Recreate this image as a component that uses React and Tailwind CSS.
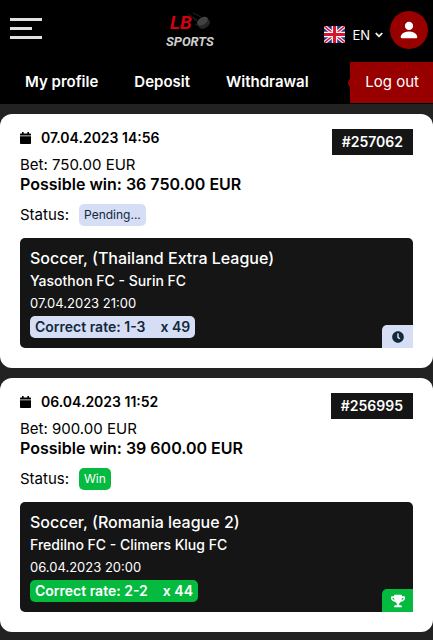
import React from 'react'
import { FaClock, FaTrophy, FaChevronDown } from 'react-icons/fa'
import { BsPersonFill } from 'react-icons/bs'
import { clsx } from 'clsx'

const bets = [
  {
    id: '257062',
    placedAt: '07.04.2023 14:56',
    amount: '750.00 EUR',
    possibleWin: '36 750.00 EUR',
    status: 'pending',
    league: 'Soccer, (Thailand Extra League)',
    match: 'Yasothon FC - Surin FC',
    startsAt: '07.04.2023 21:00',
    rate: '1-3',
    odds: 'x 49',
  },
  {
    id: '256995',
    placedAt: '06.04.2023 11:52',
    amount: '900.00 EUR',
    possibleWin: '39 600.00 EUR',
    status: 'win',
    league: 'Soccer, (Romania league 2)',
    match: 'Fredilno FC - Climers Klug FC',
    startsAt: '06.04.2023 20:00',
    rate: '2-2',
    odds: 'x 44',
  },
]

const statuses = {
  pending: { label: 'Pending...', colors: 'bg-[#d5def4] text-[#14283c]', Icon: FaClock },
  win: { label: 'Win', colors: 'bg-[#04ba3f] text-white', Icon: FaTrophy },
}

function Logo() {
  return (
    <svg width="50" height="40" viewBox="0 0 50 40" role="img" aria-label="LB Sports">
      {/* Speed lines behind the puck */}
      <path d="M22 4l9 6M27 3l8 4M27 8l6 5M29 14l4 2" stroke="#2c2c2c" strokeWidth="0.8" />
      <g transform="rotate(-32 37 12)">
        <path d="M31 11v4c0 2 3 3.5 6 3.5s6-1.5 6-3.5v-4z" fill="#262626" />
        <ellipse cx="37" cy="11" rx="6" ry="3.6" fill="#424242" />
      </g>
      <g fontFamily='"Liberation Sans Narrow", "Roboto", sans-serif' fontWeight="700" fontStyle="italic">
        <text x="4" y="19" fontSize="19" fill="#d4000c">LB</text>
        <text x="0" y="36" fontSize="13" fill="#cfcfcf">SPORTS</text>
      </g>
    </svg>
  )
}

function UkFlag() {
  return (
    <svg width="21" height="17" viewBox="0 0 21 17" aria-hidden="true">
      <rect width="21" height="17" fill="#27358b" />
      <path d="M0 0l21 17M21 0L0 17" stroke="#fff" strokeWidth="3.6" />
      <path d="M0 0l21 17M21 0L0 17" stroke="#d5162e" strokeWidth="1.5" />
      <path d="M10.5 0v17M0 8.5h21" stroke="#fff" strokeWidth="5.4" />
      <path d="M10.5 0v17M0 8.5h21" stroke="#d5162e" strokeWidth="3.2" />
    </svg>
  )
}

function CalendarIcon() {
  return (
    <svg width="11" height="12" viewBox="0 0 11 12" fill="currentColor" aria-hidden="true">
      <path d="M2 0h1.6v1.4h3.8V0H9v1.4h1.2c.5 0 .8.3.8.8v1.4H0V2.2c0-.5.3-.8.8-.8H2z" />
      <path d="M0 4.3h11v6.9c0 .5-.3.8-.8.8H.8c-.5 0-.8-.3-.8-.8z" />
    </svg>
  )
}

function Header() {
  return (
    <header className="bg-black text-white">
      <div className="flex h-[60px] items-center justify-between pl-2.5 pr-[5px]">
        <button type="button" aria-label="Menu" className="mb-1 flex h-6 w-8 flex-col justify-center gap-[6px]">
          <span className="h-[3px] w-8 bg-[#e0e0e0]" />
          <span className="h-[3px] w-[22px] bg-[#e0e0e0]" />
          <span className="h-[3px] w-8 bg-[#e0e0e0]" />
        </button>
        <a href="#home" className="pl-4">
          <Logo />
        </a>
        <div className="flex items-center">
          <button type="button" className="mr-[7px] flex items-end pt-2 text-[13px] leading-4">
            <UkFlag />
            <span className="ml-[7px]">EN</span>
            <FaChevronDown className="mb-1 ml-[5px] size-2" stroke="currentColor" strokeWidth="40" aria-hidden="true" />
          </button>
          <a
            href="#account"
            aria-label="Account"
            className="flex size-[38px] items-center justify-center rounded-full bg-[#980000]"
          >
            <BsPersonFill className="size-[22px]" />
          </a>
        </div>
      </div>

      <nav className="flex h-11 items-center justify-between pl-[25px] text-[15px]">
        <div className="flex gap-9 font-semibold">
          <a href="#profile">My profile</a>
          <a href="#deposit">Deposit</a>
          <a href="#withdrawal">Withdrawal</a>
        </div>
        <div className="relative">
          <span className="absolute -left-0.5 top-4 h-2.5 w-2.5 rounded-full bg-[#980000]" />
          <button type="button" className="relative h-[41px] bg-[#980000] pl-[15px] pr-3.5">
            Log out
          </button>
        </div>
      </nav>
    </header>
  )
}

function BetCard({ bet }) {
  const { label, colors, Icon } = statuses[bet.status]

  return (
    <article className="rounded-xl bg-white p-5 pt-[15px] text-black">
      <div className="flex items-start justify-between">
        <div>
          <div className="flex h-[18px] items-center gap-2.5 text-sm font-semibold">
            <CalendarIcon />
            <time>{bet.placedAt}</time>
          </div>
          <p className="mt-2 text-[15px] leading-5">Bet: {bet.amount}</p>
          <p className="text-base font-semibold leading-[18px]">Possible win: {bet.possibleWin}</p>
        </div>
        <span className="h-[26px] bg-[#151515] px-2.5 text-sm font-semibold leading-[26px] text-white">
          #{bet.id}
        </span>
      </div>

      <div className="mt-[11px] flex h-[22px] items-center gap-2.5 text-[15px]">
        <span>Status:</span>
        <span className={clsx('h-[22px] rounded-[5px] px-[5px] text-xs leading-[22px]', colors)}>{label}</span>
      </div>

      <div className="relative mt-3 rounded-[5px] bg-[#151515] p-2.5 text-white">
        <h2 className="text-base font-medium leading-5">{bet.league}</h2>
        <p className="mt-[3px] text-sm font-medium leading-5">{bet.match}</p>
        <p className="mt-0.5 text-[13px] leading-5">{bet.startsAt}</p>
        <p
          className={clsx(
            'mt-[3px] inline-flex h-[22px] items-center gap-[15px] rounded-[5px] px-[5px] align-top text-sm font-semibold',
            colors
          )}
        >
          <span>Correct rate: {bet.rate}</span>
          <span>{bet.odds}</span>
        </p>
        <span
          className={clsx(
            'absolute bottom-0 right-0 flex h-[23px] w-[31px] items-center justify-center rounded-tl-[5px]',
            colors
          )}
        >
          <Icon className={bet.status === 'win' ? 'size-3.5' : 'size-3'} aria-hidden="true" />
        </span>
      </div>
    </article>
  )
}

export default function App() {
  return (
    <div className="min-h-screen bg-[#222] font-['Inter',sans-serif]">
      <Header />
      <main className="flex flex-col gap-2.5 pb-2 pt-2.5">
        {bets.map((bet) => (
          <BetCard key={bet.id} bet={bet} />
        ))}
      </main>
    </div>
  )
}
